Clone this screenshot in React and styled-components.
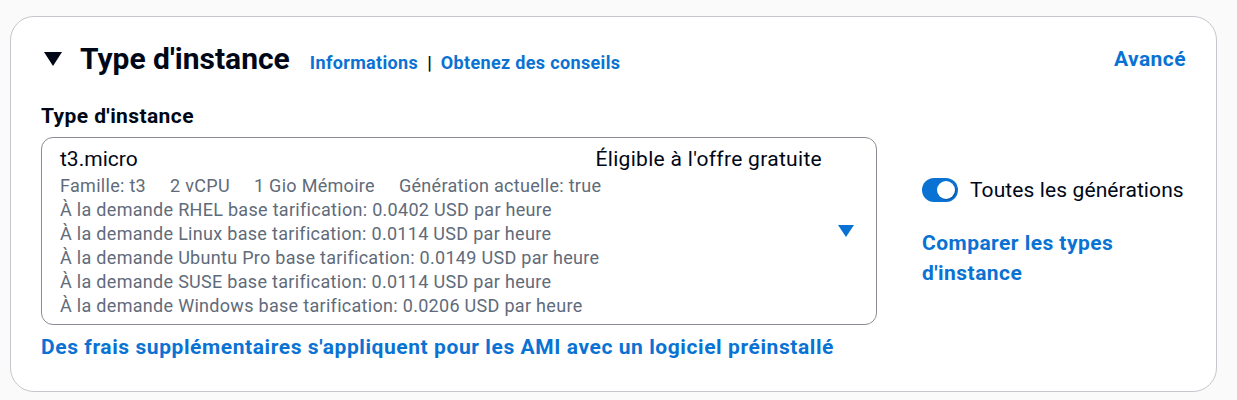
import React from "react";
import styled, { createGlobalStyle } from "styled-components";

const GlobalStyle = createGlobalStyle`
  html, body { margin: 0; padding: 0; }
  body {
    background: #fafafa;
    font-family: Roboto, "Noto Sans", Arial, sans-serif;
    color: #000716;
    -webkit-font-smoothing: antialiased;
  }
`;

const Page = styled.div`
  padding: 16px 20px 8px 10px;
`;

const Panel = styled.section`
  background: #ffffff;
  border: 1px solid #c6c6cd;
  border-radius: 24px;
  padding: 24px 30px 29px 30px;
`;

const Header = styled.header`
  display: flex;
  justify-content: space-between;
  align-items: center;
  height: 36px;
`;

const TitleGroup = styled.div`
  display: flex;
  align-items: baseline;
`;

const ExpandIcon = styled.svg`
  align-self: center;
  width: 18px;
  height: 14px;
  margin-left: 3px;
  margin-right: 18px;
  fill: #000716;
`;

const Title = styled.h2`
  margin: 0;
  font-size: 30px;
  line-height: 36px;
  font-weight: 700;
  color: #000716;
`;

const InfoLinks = styled.div`
  display: flex;
  align-items: baseline;
  gap: 9px;
  margin-left: 20px;
`;

const Link = styled.a`
  color: #0972d3;
  font-weight: 700;
  text-decoration: none;
  cursor: pointer;
  font-size: ${(p) => (p.$small ? "18px" : "21px")};
  line-height: ${(p) => (p.$small ? "24px" : "30px")};
  letter-spacing: ${(p) => (p.$small ? "0.35px" : "0.45px")};
`;

const Separator = styled.span`
  font-size: 18px;
  line-height: 24px;
  font-weight: 700;
  color: #000716;
`;

const Body = styled.div`
  display: grid;
  grid-template-columns: 836px 1fr;
  column-gap: 45px;
  margin-top: 24px;
`;

const LeftColumn = styled.div`
  display: flex;
  flex-direction: column;
`;

const FieldLabel = styled.label`
  font-size: 21px;
  line-height: 30px;
  font-weight: 700;
  letter-spacing: 0.4px;
  color: #000716;
  margin-bottom: 6px;
`;

const SelectBox = styled.div`
  display: flex;
  align-items: center;
  border: 1px solid #8c8c94;
  border-radius: 12px;
  padding: 6px 22px 6px 18px;
  background: #ffffff;
`;

const OptionContent = styled.div`
  flex: 1;
  min-width: 0;
`;

const OptionTop = styled.div`
  display: flex;
  justify-content: space-between;
  align-items: baseline;
  font-size: 21px;
  line-height: 30px;
  color: #000716;
`;

const EligibleTag = styled.span`
  letter-spacing: 0.3px;
`;

const DescLine = styled.div`
  display: flex;
  gap: 24px;
  font-size: 18px;
  line-height: 24px;
  letter-spacing: 0.3px;
  color: #5f6b7a;
`;

const Caret = styled.svg`
  width: 16px;
  height: 12px;
  margin-left: 16px;
  flex: none;
  fill: #0972d3;
`;

const FootLink = styled(Link)`
  margin-top: 7px;
  letter-spacing: 0.58px;
`;

const RightColumn = styled.div`
  align-self: center;
  display: flex;
  flex-direction: column;
  align-items: flex-start;
  gap: 23px;
`;

const ToggleRow = styled.div`
  display: flex;
  align-items: center;
  gap: 12px;
  height: 30px;
`;

const ToggleTrack = styled.span`
  display: flex;
  justify-content: ${(p) => (p.$on ? "flex-end" : "flex-start")};
  align-items: center;
  box-sizing: border-box;
  width: 36px;
  height: 24px;
  padding: 3px;
  border-radius: 12px;
  background: ${(p) => (p.$on ? "#0972d3" : "#8c8c94")};
`;

const ToggleKnob = styled.span`
  width: 18px;
  height: 18px;
  border-radius: 50%;
  background: #ffffff;
  box-shadow: 1px 1px 1px rgba(0, 7, 22, 0.25);
`;

const ToggleLabel = styled.span`
  font-size: 21px;
  line-height: 30px;
  letter-spacing: 0.1px;
  color: #000716;
`;

const specs = ["Famille: t3", "2 vCPU", "1 Gio Mémoire", "Génération actuelle: true"];
const prices = [
  ["RHEL", "0.0402"],
  ["Linux", "0.0114"],
  ["Ubuntu Pro", "0.0149"],
  ["SUSE", "0.0114"],
  ["Windows", "0.0206"],
];

export default function App() {
  return (
    <Page>
      <GlobalStyle />
      <Panel>
        <Header>
          <TitleGroup>
            <ExpandIcon viewBox="0 0 18 14">
              <polygon points="0,0 18,0 9,14" />
            </ExpandIcon>
            <Title>Type d'instance</Title>
            <InfoLinks>
              <Link $small>Informations</Link>
              <Separator>|</Separator>
              <Link $small>Obtenez des conseils</Link>
            </InfoLinks>
          </TitleGroup>
          <Link>Avancé</Link>
        </Header>
        <Body>
          <LeftColumn>
            <FieldLabel>Type d'instance</FieldLabel>
            <SelectBox>
              <OptionContent>
                <OptionTop>
                  <span>t3.micro</span>
                  <EligibleTag>Éligible à l'offre gratuite</EligibleTag>
                </OptionTop>
                <DescLine>
                  {specs.map((s) => (
                    <span key={s}>{s}</span>
                  ))}
                </DescLine>
                {prices.map(([os, price]) => (
                  <DescLine key={os}>
                    À la demande {os} base tarification: {price} USD par heure
                  </DescLine>
                ))}
              </OptionContent>
              <Caret viewBox="0 0 16 12">
                <polygon points="0,0 16,0 8,12" />
              </Caret>
            </SelectBox>
            <FootLink>
              Des frais supplémentaires s'appliquent pour les AMI avec un logiciel préinstallé
            </FootLink>
          </LeftColumn>
          <RightColumn>
            <ToggleRow>
              <ToggleTrack $on>
                <ToggleKnob />
              </ToggleTrack>
              <ToggleLabel>Toutes les générations</ToggleLabel>
            </ToggleRow>
            <Link>Comparer les types d'instance</Link>
          </RightColumn>
        </Body>
      </Panel>
    </Page>
  );
}
